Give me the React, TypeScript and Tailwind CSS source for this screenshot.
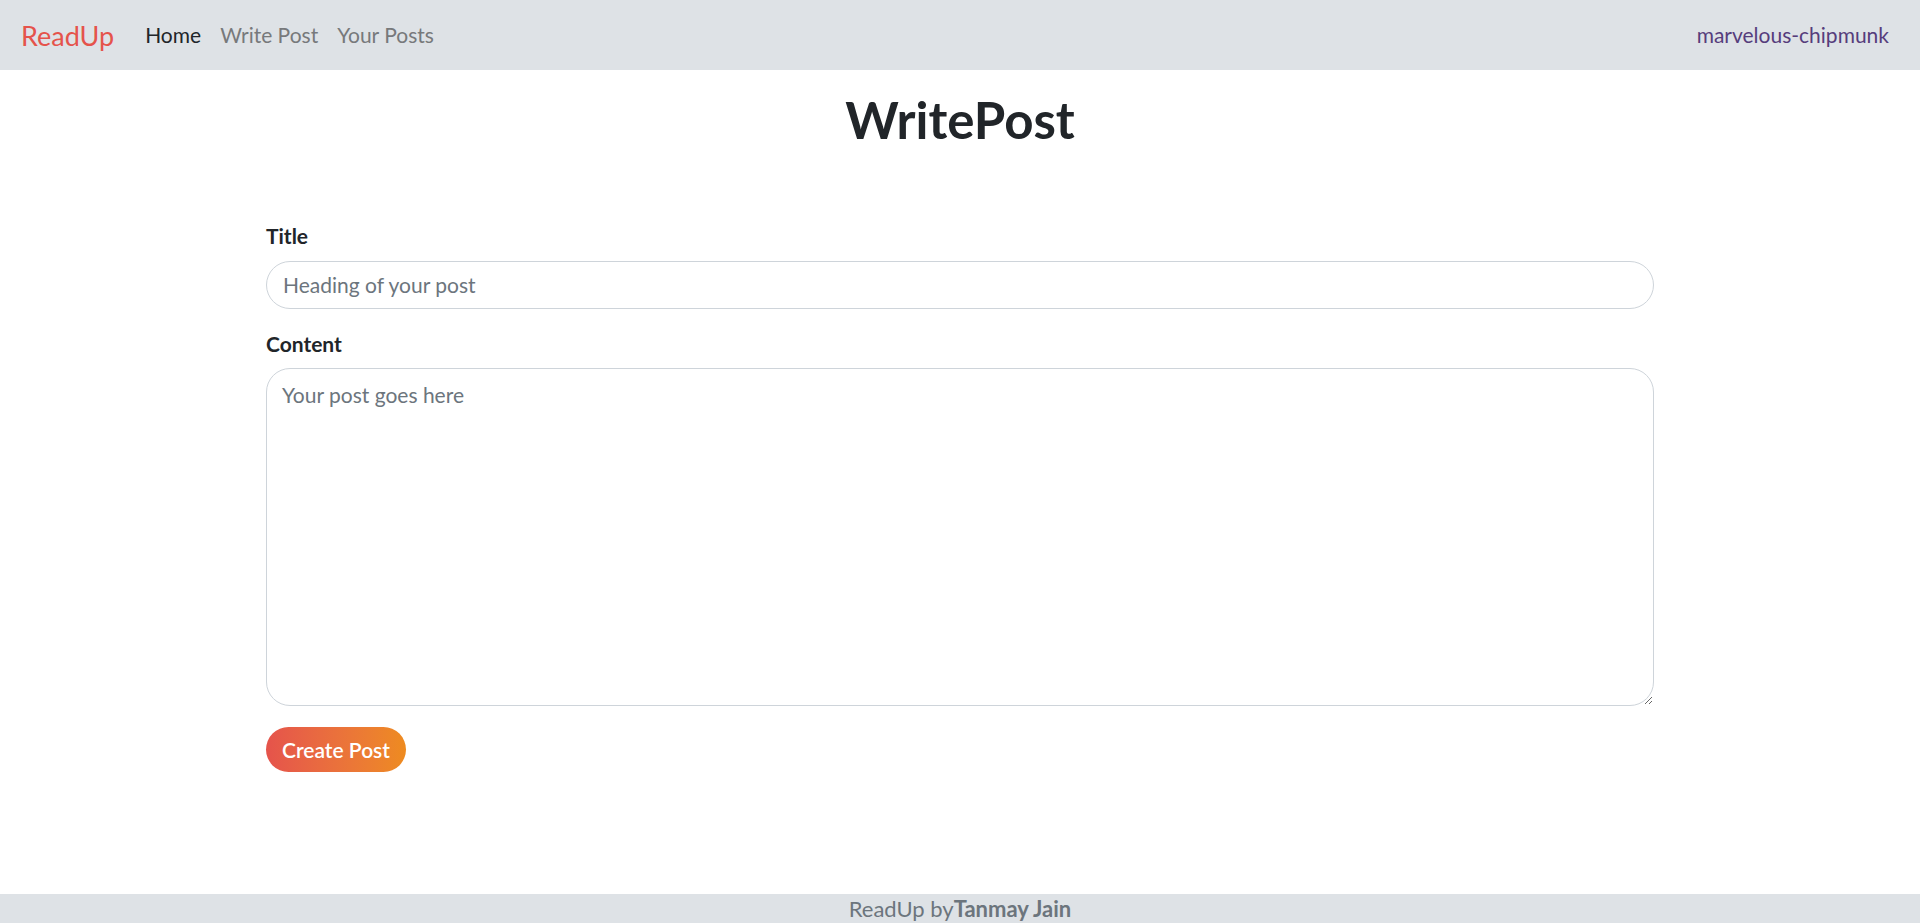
import { useState } from "react";

const NavBar = () => {
  return (
    <nav className="h-[70px] bg-[#dee2e6] flex items-center justify-between px-[21px]">
      <div className="flex items-center">
        <a className="text-[27px] text-[#e5534b] mr-[31px] leading-none">ReadUp</a>
        <div className="flex items-center gap-x-[19px] text-[21px]">
          <a className="text-[#212529]">Home</a>
          <a className="text-[#77797b]">Write Post</a>
          <a className="text-[#77797b]">Your Posts</a>
        </div>
      </div>
      <span className="text-[21px] text-[#563d7c] mr-[10px]">marvelous-chipmunk</span>
    </nav>
  );
};

const App = () => {
  const [title, setTitle] = useState<string>("");
  const [content, setContent] = useState<string>("");

  return (
    <div className="min-h-screen flex flex-col bg-white font-['Lato','Open_Sans',sans-serif]">
      <NavBar />
      <main className="flex-1">
        <h1 className="text-center text-[51px] font-bold text-[#212529] mt-[20px] leading-[60px]">
          WritePost
        </h1>
        <div className="w-[1388px] mx-auto mt-[70px]">
          <label className="block text-[21px] font-bold text-[#212529] mb-[9px]">Title</label>
          <input
            type="text"
            value={title}
            onChange={(e) => setTitle(e.target.value)}
            placeholder="Heading of your post"
            className="w-full h-[48px] px-[16px] text-[21px] text-[#212529] border border-[#ced4da] rounded-full outline-none placeholder:text-[#6c757d]"
          />
          <label className="block text-[21px] font-bold text-[#212529] mt-[19px] mb-[9px]">Content</label>
          <textarea
            value={content}
            onChange={(e) => setContent(e.target.value)}
            placeholder="Your post goes here"
            className="block w-full h-[338px] px-[15px] py-[10px] text-[21px] text-[#212529] border border-[#ced4da] rounded-[24px] outline-none placeholder:text-[#6c757d]"
          />
          <button className="mt-[21px] h-[45px] px-[16px] rounded-full text-white text-[21px] font-semibold bg-linear-to-r from-[#e5534b] to-[#ee8b1f]">
            Create Post
          </button>
        </div>
      </main>
      <footer className="h-[29px] bg-[#dee2e6] flex items-center justify-center text-[22px] text-[#6c757d]">
        ReadUp by<span className="font-bold">Tanmay Jain</span>
      </footer>
    </div>
  );
};

export default App;
